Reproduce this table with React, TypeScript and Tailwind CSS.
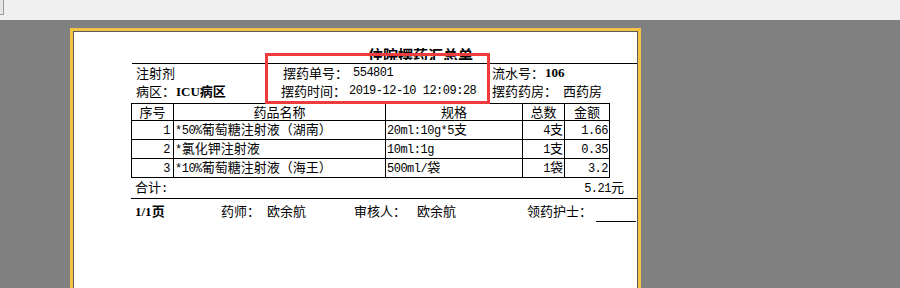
import React from 'react';

// half-width Latin/digits, to get close to the SimSun print look
const M = ({ children }: { children: React.ReactNode }) => (
  <span className="font-['Liberation_Mono',monospace] text-[12px] tracking-[-0.5px]">{children}</span>
);

const B = ({ children }: { children: React.ReactNode }) => (
  <span className="font-['Liberation_Serif',serif] font-bold">{children}</span>
);

interface Row {
  no: string;
  prefix: string;
  name: string;
  spec: string;
  specUnit: string;
  qty: string;
  unit: string;
  amount: string;
}

const rows: Row[] = [
  { no: '1', prefix: '*50%', name: '葡萄糖注射液（湖南）', spec: '20ml:10g*5', specUnit: '支', qty: '4', unit: '支', amount: '1.66' },
  { no: '2', prefix: '*', name: '氯化钾注射液', spec: '10ml:1g', specUnit: '', qty: '1', unit: '支', amount: '0.35' },
  { no: '3', prefix: '*10%', name: '葡萄糖注射液（海王）', spec: '500ml/', specUnit: '袋', qty: '1', unit: '袋', amount: '3.2' },
];

export default function App() {
  return (
    <div className="w-[900px] h-[288px] overflow-hidden bg-[#808080] font-['Noto_Sans_CJK_SC',sans-serif] text-[13px] text-black">
      {/* toolbar strip */}
      <div className="h-[20px] bg-[#f0f0f0]">
        <div className="w-[4px] h-[15px] bg-[#e5e5e5] border-r border-b border-[#9a9a9a]" />
      </div>

      {/* report page */}
      <div className="ml-[70px] mt-[8px] w-[571px] h-[400px] border-[3px] border-[#f5c344]">
        <div className="relative h-full bg-white border border-[#5a5a5a]">
          {/* title, clipped by the header band */}
          <div className="pt-[13px] pl-[294px]">
            <div className="h-[15px] overflow-hidden">
              <div className="mt-[1px] text-[15px] leading-[18px] font-bold whitespace-nowrap">住院摆药汇总单</div>
            </div>
          </div>
          <div className="ml-[58px] mt-[3px] h-px bg-black" />

          {/* info rows */}
          <div className="pl-[58px]">
            <div className="flex h-[18px] items-center leading-[18px] whitespace-nowrap">
              <div className="w-[145px] pl-[4px]">注射剂</div>
              <div className="w-[211px] pl-[6px] flex">
                <span className="w-[70px]">摆药单号：</span>
                <M>554801</M>
              </div>
              <div className="pl-[4px] flex">
                <span className="w-[53px]">流水号：</span>
                <B>106</B>
              </div>
            </div>
            <div className="flex h-[18px] items-center leading-[18px] whitespace-nowrap">
              <div className="w-[145px] pl-[4px] flex">
                <span className="w-[40px]">病区：</span>
                <span className="font-bold"><B>ICU</B>病区</span>
              </div>
              <div className="w-[211px] pl-[4px] flex">
                <span className="w-[68px]">摆药时间：</span>
                <M>2019-12-10 12:09:28</M>
              </div>
              <div className="pl-[4px] flex">
                <span className="w-[71px]">摆药药房：</span>
                <span>西药房</span>
              </div>
            </div>
          </div>

          {/* detail table */}
          <div className="pl-[57px] mt-[3px]">
            <table className="table-fixed border-collapse w-[478px] leading-[16px] whitespace-nowrap">
              <colgroup>
                <col className="w-[42px]" />
                <col className="w-[212px]" />
                <col className="w-[137px]" />
                <col className="w-[42px]" />
                <col className="w-[45px]" />
              </colgroup>
              <thead>
                <tr className="h-[17px]">
                  <th className="border border-black font-normal p-0 text-center">序号</th>
                  <th className="border border-black font-normal p-0 text-center">药品名称</th>
                  <th className="border border-black font-normal p-0 text-center">规格</th>
                  <th className="border border-black font-normal p-0 text-center">总数</th>
                  <th className="border border-black font-normal p-0 text-center">金额</th>
                </tr>
              </thead>
              <tbody>
                {rows.map((r) => (
                  <tr key={r.no} className="h-[19px]">
                    <td className="border border-black p-0 pr-[3px] text-right"><M>{r.no}</M></td>
                    <td className="border border-black p-0 pl-[1px] overflow-hidden">
                      <M>{r.prefix}</M>{r.name}
                    </td>
                    <td className="border border-black p-0 pl-[1px] overflow-hidden">
                      <M>{r.spec}</M>{r.specUnit}
                    </td>
                    <td className="border border-black p-0 pr-[1px] text-right">
                      <M>{r.qty}</M>{r.unit}
                    </td>
                    <td className="border border-black p-0 pr-[1px] text-right"><M>{r.amount}</M></td>
                  </tr>
                ))}
              </tbody>
            </table>
          </div>

          {/* total */}
          <div className="pl-[57px]">
            <div className="w-[493px] h-[20px] pl-[4px] flex items-center justify-between leading-[20px]">
              <span>合计<M>:</M></span>
              <span><M>5.21</M>元</span>
            </div>
          </div>
          <div className="ml-[57px] h-px bg-black" />

          {/* signatures */}
          <div className="pl-[57px]">
            <div className="flex h-[24px] items-center leading-[24px] whitespace-nowrap">
              <span className="w-[90px] pl-[4px] font-bold"><B>1/1</B>页</span>
              <span className="w-[46px]">药师：</span>
              <span className="w-[87px]">欧余航</span>
              <span className="w-[63px]">审核人：</span>
              <span className="w-[110px]">欧余航</span>
              <span className="w-[69px]">领药护士：</span>
              <span className="w-[40px] self-end mb-[1px] h-px bg-black" />
            </div>
          </div>

          {/* red highlight box drawn over the header */}
          <div className="absolute left-[191px] top-[21px] w-[225px] h-[51px] border-[3px] border-[#ee3b3b]" />
        </div>
      </div>
    </div>
  );
}
